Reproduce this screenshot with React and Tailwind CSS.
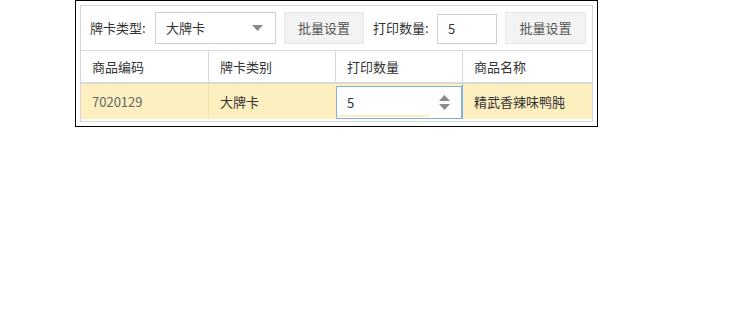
import { useState } from 'react';

const FONT = { fontFamily: '"Noto Sans CJK SC", "Noto Sans", sans-serif' };

const COLUMNS = ['商品编码', '牌卡类别', '打印数量', '商品名称'];

function Caret({ className = '' }) {
  return (
    <svg width="11" height="6" viewBox="0 0 11 6" className={className}>
      <path d="M0 0 L11 0 L5.5 6 Z" fill="#8a8a8a" />
    </svg>
  );
}

function BatchButton({ wide }) {
  return (
    <button
      className={`h-[32px] ${wide ? 'w-[81px]' : 'w-[80px]'} border border-[#e6e6e6] bg-[#f3f3f3] text-[13px] text-[#555] rounded-[1px]`}
    >
      批量设置
    </button>
  );
}

function Spinner() {
  return (
    <div className="absolute right-[11px] top-[8px] flex flex-col gap-[3px]">
      <svg width="11" height="6" viewBox="0 0 11 6">
        <path d="M0 6 L5.5 0 L11 6 Z" fill="#8c8c8c" />
      </svg>
      <svg width="11" height="6" viewBox="0 0 11 6">
        <path d="M0 0 L11 0 L5.5 6 Z" fill="#8c8c8c" />
      </svg>
    </div>
  );
}

export default function App() {
  const [qty, setQty] = useState('5');

  return (
    <div className="w-[745px] h-[323px] bg-white" style={FONT}>
      <div className="ml-[75px] w-[523px] h-[127px] border border-black p-[4px]">
        <div className="h-[117px] border border-[#d6d6d6]">
          {/* Toolbar */}
          <div className="h-[44px] flex items-center pl-[9px] text-[13px] text-[#333]">
            <span className="w-[65px]">牌卡类型:</span>
            <div className="h-[32px] w-[121px] border border-[#d0d0d0] flex items-center justify-between pl-[10px] pr-[12px]">
              <span>大牌卡</span>
              <Caret />
            </div>
            <div className="ml-[8px]">
              <BatchButton />
            </div>
            <span className="ml-[9px] w-[64px]">打印数量:</span>
            <div className="h-[30px] w-[60px] border border-[#d0d0d0] flex items-center pl-[10px] mt-[2px]">5</div>
            <div className="ml-[8px]">
              <BatchButton wide />
            </div>
          </div>

          {/* Table header */}
          <div className="grid grid-cols-[127px_127px_127px_1fr] h-[34px] border-t border-b-2 border-[#dadada] text-[13px] text-[#333]">
            {COLUMNS.map((c, i) => (
              <div key={c} className={`flex items-center pl-[11px] ${i > 0 ? 'border-l border-[#dadada]' : ''}`}>
                {c}
              </div>
            ))}
          </div>

          {/* Row */}
          <div className="grid grid-cols-[127px_127px_127px_1fr] h-[35px] bg-[#fdefc0] text-[13px] text-[#333]">
            <div className="flex items-center pl-[11px] text-[#666]">7020129</div>
            <div className="flex items-center pl-[11px] border-l border-[#f3e2ad]">大牌卡</div>
            <div className="pt-[2px] pl-[1px]">
              <div className="relative h-[33px] border border-[#7fb0e0] bg-white flex items-center pl-[10px]">
                <input
                  value={qty}
                  onChange={e => setQty(e.target.value)}
                  className="w-[70px] outline-none bg-transparent text-[13px] text-[#333]"
                />
                <Spinner />
                <div className="absolute left-0 bottom-[1px] w-[93px] h-[2px] bg-[#fdefc0]" />
              </div>
            </div>
            <div className="flex items-center pl-[11px] border-l border-[#7fb0e0]">精武香辣味鸭肫</div>
          </div>
        </div>
      </div>
    </div>
  );
}
